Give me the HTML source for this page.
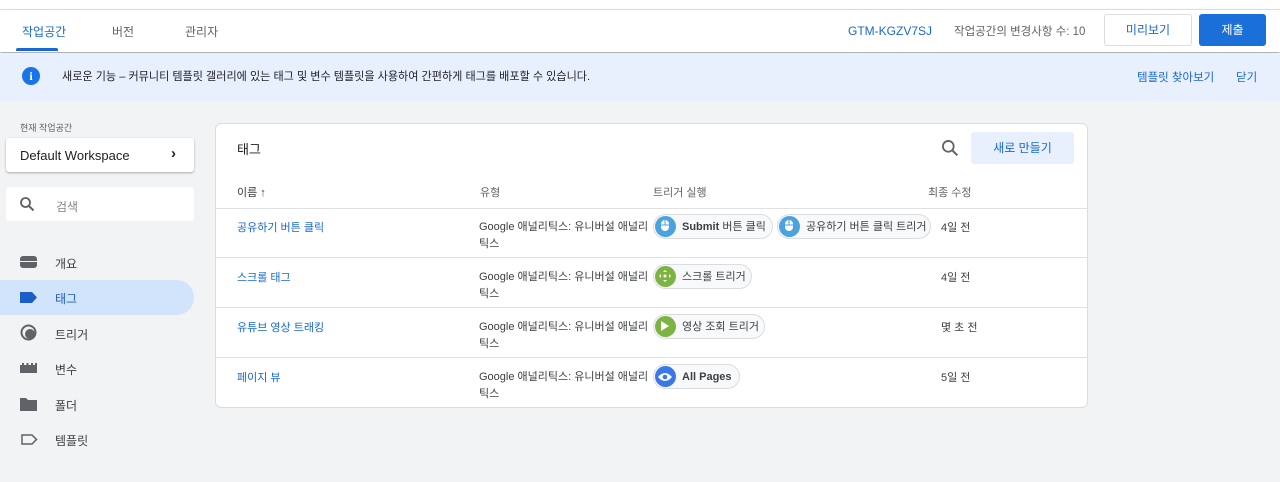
<!DOCTYPE html>
<html><head><meta charset="utf-8"><style>
*{margin:0;padding:0;box-sizing:border-box}
body{width:1280px;height:482px;overflow:hidden;background:#f1f3f4;font-family:"Liberation Sans","Noto Sans CJK KR",sans-serif;color:#202124;position:relative;font-size:12px}
.a{position:absolute;white-space:nowrap}
.top{left:0;top:0;width:1280px;height:10px;background:#fff;border-bottom:1px solid #e6e6e6}
.hdr{left:0;top:10px;width:1280px;height:42px;background:#fff;box-shadow:0 2px 4px rgba(0,0,0,.35)}
.ban{left:0;top:53px;width:1280px;height:48px;background:#e8f0fe}
.blue{color:#1967d2}
.chip{position:absolute;height:25px;border:1px solid #dadce0;background:#f8f9fa;border-radius:13px;padding:0 10px 0 28px;line-height:24px;font-size:11px;color:#3c4043;white-space:nowrap}
.chip i{position:absolute;left:1px;top:1px;width:21px;height:21px;border-radius:50%}
.nav{left:55px;font-size:12px;color:#3c4043}
.row{position:absolute;left:215px;width:873px;height:1px;background:#e0e0e0}
</style></head><body>
<div class="a top"></div>
<div class="a hdr"></div>
<div class="a blue" style="left:22px;top:23px;font-size:12px">작업공간</div>
<div class="a" style="left:16px;top:48px;width:42px;height:3px;background:#1967d2;border-radius:2px 2px 0 0"></div>
<div class="a" style="left:112px;top:23px;color:#5f6368">버전</div>
<div class="a" style="left:185px;top:23px;color:#5f6368">관리자</div>
<div class="a blue" style="left:848px;top:24px">GTM-KGZV7SJ</div>
<div class="a" style="left:954px;top:23px;color:#5f6368;font-size:11.5px">작업공간의 변경사항 수: 10</div>
<div class="a" style="left:1104px;top:14px;width:88px;height:32px;border:1px solid #dadce0;border-radius:3px;text-align:center;line-height:30px;color:#1967d2;background:#fff">미리보기</div>
<div class="a" style="left:1199px;top:14px;width:67px;height:32px;background:#1a6fd8;border-radius:3px;text-align:center;line-height:32px;color:#fff">제출</div>
<div class="a ban"></div>
<div class="a" style="left:22px;top:67px;width:18px;height:18px;border-radius:50%;background:#1a73e8;color:#fff;font-weight:bold;font-size:12px;text-align:center;line-height:18px;font-family:'Liberation Serif',serif">i</div>
<div class="a" style="left:62px;top:68px;font-size:11.1px;color:#202124">새로운 기능 – 커뮤니티 템플릿 갤러리에 있는 태그 및 변수 템플릿을 사용하여 간편하게 태그를 배포할 수 있습니다.</div>
<div class="a blue" style="left:1137px;top:69px;font-size:11.5px">템플릿 찾아보기</div>
<div class="a blue" style="left:1236px;top:69px;font-size:11.5px">닫기</div>

<div class="a" style="left:20px;top:121px;font-size:9px;color:#5f6368">현재 작업공간</div>
<div class="a" style="left:6px;top:138px;width:188px;height:34px;background:#fff;border-radius:3px;box-shadow:0 1px 2px rgba(0,0,0,.3)"></div>
<div class="a" style="left:20px;top:148px;font-size:13px;color:#202124">Default Workspace</div>
<div class="a" style="left:171px;top:145px;font-size:15px;font-weight:bold">›</div>
<div class="a" style="left:6px;top:187px;width:188px;height:34px;background:#fff;border-radius:3px"></div>
<svg class="a" style="left:19px;top:196px" width="16" height="16" viewBox="0 0 16 16"><circle cx="6.5" cy="6.5" r="4.5" fill="none" stroke="#5f6368" stroke-width="1.8"/><path d="M10 10l4.5 4.5" stroke="#5f6368" stroke-width="2"/></svg>
<div class="a" style="left:56px;top:198px;color:#80868b">검색</div>

<div class="a" style="left:0;top:280px;width:194px;height:35px;background:#d2e3fc;border-radius:0 18px 18px 0"></div>
<svg class="a" style="left:20px;top:256px" width="17" height="12"><rect x="0" y="0" width="17" height="12" rx="3" fill="#5f6368"/><rect x="0" y="5" width="17" height="1" fill="#f1f3f4"/></svg>
<div class="a nav" style="top:255px">개요</div>
<svg class="a" style="left:20px;top:292px" width="17" height="11"><path d="M0 0h12l5 5.5-5 5.5H0z" fill="#1a5ec8"/></svg>
<div class="a nav" style="top:290px;color:#1a5ec8">태그</div>
<svg class="a" style="left:20px;top:324px" width="17" height="17"><circle cx="8.5" cy="8.5" r="7" fill="none" stroke="#5f6368" stroke-width="2"/><circle cx="10" cy="10" r="5" fill="#5f6368"/></svg>
<div class="a nav" style="top:326px">트리거</div>
<svg class="a" style="left:20px;top:363px" width="17" height="10"><path d="M0 2h2V0h2v2h2.5V0h2v2H11V0h2v2h2V0h2v10H0z" fill="#5f6368"/></svg>
<div class="a nav" style="top:361px">변수</div>
<svg class="a" style="left:20px;top:398px" width="17" height="13"><path d="M0 0h6l2 2h9v11H0z" fill="#5f6368"/></svg>
<div class="a nav" style="top:397px">폴더</div>
<svg class="a" style="left:21px;top:434px" width="17" height="11"><path d="M1 1h10l4.5 4.5L11 10H1z" fill="none" stroke="#5f6368" stroke-width="1.5"/></svg>
<div class="a nav" style="top:432px">템플릿</div>

<div class="a" style="left:215px;top:123px;width:873px;height:285px;background:#fff;border:1px solid #dadce0;border-radius:6px"></div>
<div class="a" style="left:237px;top:139px;font-size:13px">태그</div>
<svg class="a" style="left:941px;top:139px" width="18" height="18" viewBox="0 0 16 16"><circle cx="6.5" cy="6.5" r="4.8" fill="none" stroke="#5f6368" stroke-width="1.6"/><path d="M10 10l4.5 4.5" stroke="#5f6368" stroke-width="1.8"/></svg>
<div class="a" style="left:971px;top:132px;width:103px;height:32px;background:#e8f0fe;border-radius:3px;text-align:center;line-height:32px;color:#1967d2">새로 만들기</div>
<div class="a" style="left:237px;top:184px;font-size:11px;color:#3c4043">이름 ↑</div>
<div class="a" style="left:480px;top:184px;font-size:11px;color:#5f6368">유형</div>
<div class="a" style="left:653px;top:184px;font-size:11px;color:#5f6368">트리거 실행</div>
<div class="a" style="left:928px;top:184px;font-size:11px;color:#5f6368">최종 수정</div>
<div class="row" style="top:208px"></div>
<div class="row" style="top:257px"></div>
<div class="row" style="top:307px"></div>
<div class="row" style="top:357px"></div>

<div class="a blue" style="left:237px;top:219px;font-size:11px">공유하기 버튼 클릭</div>
<div class="a blue" style="left:237px;top:269px;font-size:11px">스크롤 태그</div>
<div class="a blue" style="left:237px;top:319px;font-size:11px">유튜브 영상 트래킹</div>
<div class="a blue" style="left:237px;top:369px;font-size:11px">페이지 뷰</div>

<div class="a" style="left:479px;top:219px;font-size:11px;line-height:17px;color:#3c4043">Google 애널리틱스: 유니버설 애널리<br>틱스</div>
<div class="a" style="left:479px;top:269px;font-size:11px;line-height:17px;color:#3c4043">Google 애널리틱스: 유니버설 애널리<br>틱스</div>
<div class="a" style="left:479px;top:319px;font-size:11px;line-height:17px;color:#3c4043">Google 애널리틱스: 유니버설 애널리<br>틱스</div>
<div class="a" style="left:479px;top:369px;font-size:11px;line-height:17px;color:#3c4043">Google 애널리틱스: 유니버설 애널리<br>틱스</div>

<div class="chip" style="left:653px;top:214px;width:120px"><i style="background:#4aa3df"></i><b>Submit</b> 버튼 클릭</div>
<div class="chip" style="left:777px;top:214px;width:154px"><i style="background:#4aa3df"></i>공유하기 버튼 클릭 트리거</div>
<div class="chip" style="left:653px;top:264px;width:99px"><i style="background:#7cb342"></i>스크롤 트리거</div>
<div class="chip" style="left:653px;top:314px;width:112px"><i style="background:#7cb342"></i>영상 조회 트리거</div>
<div class="chip" style="left:653px;top:364px;width:87px"><i style="background:#3b78e7"></i><b>All Pages</b></div>
<svg class="a" style="left:660px;top:219px" width="10" height="13"><rect x="1" y="1" width="8" height="11" rx="4" fill="#fff"/><path d="M5 1v5M1 6h8" stroke="#4aa3df" stroke-width="1"/></svg>
<svg class="a" style="left:784px;top:219px" width="10" height="13"><rect x="1" y="1" width="8" height="11" rx="4" fill="#fff"/><path d="M5 1v5M1 6h8" stroke="#4aa3df" stroke-width="1"/></svg>
<svg class="a" style="left:658px;top:269px" width="14" height="14"><path d="M7 1l2 2H5zM7 13l2-2H5zM1 7l2-2v4zM13 7l-2-2v4z" fill="#fff"/><circle cx="7" cy="7" r="1.5" fill="#fff"/></svg>
<svg class="a" style="left:660px;top:320px" width="10" height="12"><path d="M1 1l8 5-8 5z" fill="#fff"/></svg>
<svg class="a" style="left:657px;top:371px" width="16" height="12"><path d="M1 6Q8 -2 15 6Q8 14 1 6z" fill="#fff"/><circle cx="8" cy="6" r="2.3" fill="#3b78e7"/></svg>

<div class="a" style="left:941px;top:219px;font-size:11px;color:#3c4043">4일 전</div>
<div class="a" style="left:941px;top:269px;font-size:11px;color:#3c4043">4일 전</div>
<div class="a" style="left:941px;top:319px;font-size:11px;color:#3c4043">몇 초 전</div>
<div class="a" style="left:941px;top:369px;font-size:11px;color:#3c4043">5일 전</div>
</body></html>
